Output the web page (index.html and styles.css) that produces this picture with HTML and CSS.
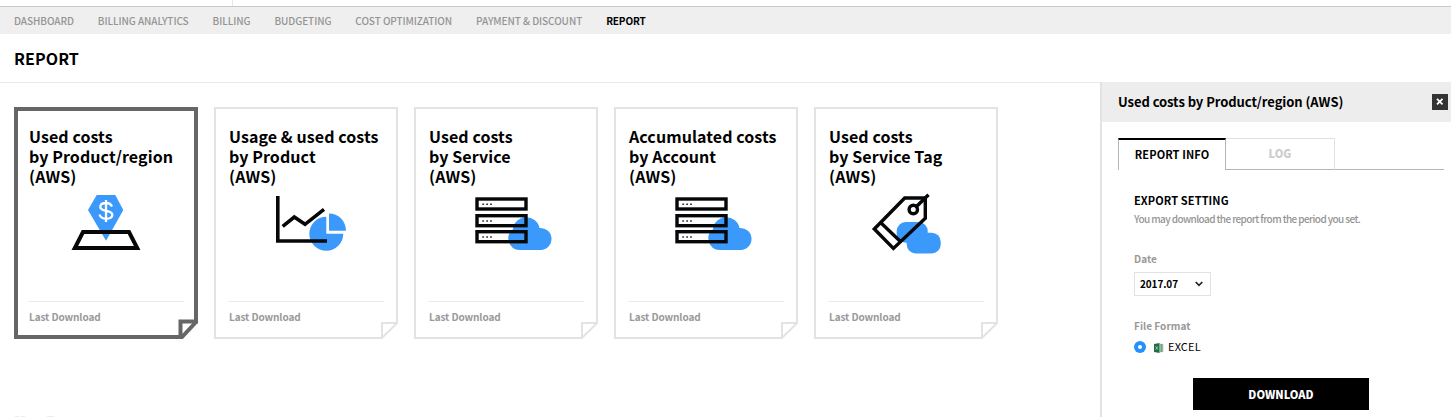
FILE: index.html
```
<!DOCTYPE html>
<html lang="en">
<head>
<meta charset="utf-8">
<title>Report</title>
<link rel="stylesheet" href="styles.css">
</head>
<body>
<svg class="defs" width="0" height="0" aria-hidden="true">
  <defs>
    <g id="frame"><path d="M1 1H183V216L168 231H1Z" fill="#fff"/><path d="M183 216H168V231" fill="none"/></g>
    <g id="servers">
      <path fill="#3c99fc" d="M63.500 58A11.500 11.500 0 0 1 57 37.300A13.400 13.400 0 0 1 83.500 36A11 11 0 0 1 85.500 58Z"/>
      <g fill="none" stroke="#050708" stroke-width="3.400"><rect x="21" y="7" width="49" height="10"/><rect x="21" y="23.700" width="49" height="10"/><rect x="21" y="39.700" width="49" height="10"/></g>
      <path fill="none" stroke="#333" stroke-width="1.600" stroke-dasharray="1.800 2.100" d="M26.300 12.300h10M26.300 29h10M26.300 45h10"/>
    </g>
  </defs>
</svg>
<header class="top"><div class="top-left"></div></header>
<nav class="nav">
  <a>DASHBOARD</a><a>BILLING ANALYTICS</a><a>BILLING</a><a>BUDGETING</a><a>COST OPTIMIZATION</a><a>PAYMENT &amp; DISCOUNT</a><a class="current">REPORT</a>
</nav>
<h1 class="page-title">REPORT</h1>
<div class="body">
  <main class="main">
    <div class="cards">
      <article class="card selected">
        <svg class="frame" viewBox="0 0 184 232"><path d="M2 2H182V215L168 230H2Z" fill="#fff"/><path d="M184 214.500H166.500V232" fill="none"/></svg>
        <h2>Used costs<br>by Product/region<br>(AWS)</h2>
        <svg class="icon" viewBox="0 0 100 64">
          <path fill="#3c99fc" d="M40.700 3H59.300L67.300 18L50 48.700L32 18Z"/>
          <path fill="none" stroke="#fff" stroke-width="2.300" d="M56 14.500C55 12 53 11 50 11C46.500 11 44.300 12.500 44.300 15C44.300 20.500 56.300 17 56.300 22.700C56.300 25.300 53.500 26.700 50 26.700C46.500 26.700 44.300 25.200 43.500 22.500M50 8V30"/>
          <path fill="none" stroke="#050708" stroke-width="4" d="M27 40H73L81.200 56H18.800Z"/>
        </svg>
        <p class="last">Last Download</p>
      </article>
      <article class="card">
        <svg class="frame" viewBox="0 0 184 232"><use href="#frame"/></svg>
        <h2>Usage &amp; used costs<br>by Product<br>(AWS)</h2>
        <svg class="icon" viewBox="0 0 100 64">
          <path fill="#3c99fc" d="M70.300 41.700V24.700A17 17 0 1 0 87.300 41.700ZM73 38.700V21.500A17 17 0 0 1 90 38.700Z"/>
          <path fill="none" stroke="#050708" stroke-width="3.600" d="M21.800 4V49H71M26.700 34.300L38.300 25L49 32.300L68 17.300"/>
        </svg>
        <p class="last">Last Download</p>
      </article>
      <article class="card">
        <svg class="frame" viewBox="0 0 184 232"><use href="#frame"/></svg>
        <h2>Used costs<br>by Service<br>(AWS)</h2>
        <svg class="icon" viewBox="0 0 100 64"><use href="#servers"/></svg>
        <p class="last">Last Download</p>
      </article>
      <article class="card">
        <svg class="frame" viewBox="0 0 184 232"><use href="#frame"/></svg>
        <h2>Accumulated costs<br>by Account<br>(AWS)</h2>
        <svg class="icon" viewBox="0 0 100 64"><use href="#servers"/></svg>
        <p class="last">Last Download</p>
      </article>
      <article class="card">
        <svg class="frame" viewBox="0 0 184 232"><use href="#frame"/></svg>
        <h2>Used costs<br>by Service Tag<br>(AWS)</h2>
        <svg class="icon" viewBox="0 0 100 64">
          <g fill="#3c99fc"><rect x="40.700" y="30" width="31" height="20.700" rx="9"/><rect x="50.700" y="40.700" width="34" height="20.700" rx="9"/></g>
          <g fill="none" stroke="#050708" stroke-width="3.400"><path d="M18.300 37L48.700 6H69.300V26.300L37.400 56.400ZM24.300 30.300L44.700 49.700"/><circle cx="57.300" cy="17.500" r="4.200"/><path d="M60.500 14.500L72.500 2.700"/></g>
        </svg>
        <p class="last">Last Download</p>
      </article>
    </div>
    <div class="next-row"><i></i><i></i><i></i></div>
  </main>
  <aside class="panel">
    <div class="panel-head">
      <h3>Used costs by Product/region (AWS)</h3>
      <svg class="close" width="16" height="16" viewBox="0 0 16 16"><rect width="16" height="16" fill="#333"/><path d="M5 4.800L10.500 10.300M10.500 4.800L5 10.300" stroke="#fff" stroke-width="1.800"/></svg>
    </div>
    <div class="tabs"><div class="tab active"><span>REPORT INFO</span></div><div class="tab"><span>LOG</span></div><div class="tab-rest"></div></div>
    <section class="form">
      <h4>EXPORT SETTING</h4>
      <p class="hint">You may download the report from the period you set.</p>
      <div class="label date">Date</div>
      <div class="select"><span>2017.07</span><svg width="8" height="6" viewBox="0 0 8 6"><path d="M.7 1L4 4.300L7.300 1" fill="none" stroke="#222" stroke-width="1.700"/></svg></div>
      <div class="label format">File Format</div>
      <div class="option">
        <svg width="12" height="12" viewBox="0 0 12 12"><circle cx="6" cy="6" r="6" fill="#2490ff"/><circle cx="6" cy="6" r="2" fill="#fff"/></svg>
        <svg class="excel" width="10" height="10" viewBox="0 0 10 10"><path fill="#1d7044" d="M0 1L5.500 0V10L0 9Z"/><path fill="#a9cbb6" stroke="#5b9672" stroke-width=".6" d="M5.800 1.300H8.800V8.700H5.800Z"/><path stroke="#5b9672" stroke-width=".8" d="M7.400 1.300V8.700"/><path d="M1.700 3.500L3.800 6.600M3.800 3.500L1.700 6.600" stroke="#b9d6c5" stroke-width=".8"/></svg>
        <span>EXCEL</span>
      </div>
    </section>
    <button class="download"><span>DOWNLOAD</span></button>
  </aside>
</div>
</body>
</html>
```
FILE: styles.css
```
* { box-sizing: border-box; margin: 0; padding: 0; }
html, body { height: 417px; overflow: hidden; background: #fff; }
body { font-family: "Noto Sans CJK KR", "Noto Sans", sans-serif; color: #000; display: flex; flex-direction: column; }
h1, h2, h3, h4, p, span, a { white-space: nowrap; }
.defs { position: absolute; }
.top { flex: none; height: 7px; border-bottom: 1px solid #c8cac8; }
.top-left { width: 233px; height: 6px; border-right: 1px solid #e8e8e8; }
.nav { flex: none; height: 27px; background: #efefef; display: flex; gap: 24px; padding: 0 0 0 14px; font-size: 10px; font-weight: 500; line-height: 28px; letter-spacing: -.07px; color: #949494; }
.nav .current { color: #000; font-weight: 700; letter-spacing: -.15px; }
.page-title { flex: none; height: 49px; border-bottom: 1px solid #ebebeb; padding-left: 14px; font-size: 16px; line-height: 48px; font-weight: 700; letter-spacing: .1px; }
.body { flex: 1; display: flex; min-height: 0; }
.main { flex: 1; padding: 24px 0 0 14px; display: flex; flex-direction: column; justify-content: space-between; }
.cards { display: flex; gap: 16px; }
.card { position: relative; width: 184px; height: 232px; display: flex; flex-direction: column; padding: 19px 14px 0; }
.frame { position: absolute; left: 0; top: 0; width: 184px; height: 232px; stroke: #e3e3e3; stroke-width: 2; }
.selected .frame { stroke: #666; stroke-width: 4; }
.card h2 { position: relative; height: 60px; padding-left: 1px; font-size: 16px; line-height: 20px; font-weight: 700; letter-spacing: .08px; }
.icon { position: relative; width: 100px; height: 64px; margin: 6px 0 0 28px; }
.last { position: relative; margin-top: 45px; border-top: 1px solid #ebebeb; padding-left: 1px; font-size: 10px; line-height: 29px; font-weight: 700; letter-spacing: -.1px; color: #999; }
.next-row { display: flex; height: 1px; }
.next-row i { height: 1px; width: 4px; margin: 0 1px; background: #eee; }
.next-row i:last-child { width: 7px; margin-left: 21px; }
.panel { width: 351px; margin-top: -1px; border-left: 2px solid #e2e2e2; background: #fff; }
.panel-head { height: 40px; background: #ededed; display: flex; align-items: center; justify-content: space-between; padding: 0 3px 0 16px; }
.panel-head h3 { font-size: 13px; font-weight: 700; line-height: 40px; letter-spacing: -.06px; }
.tabs { display: flex; height: 32px; margin: 16px 7px 0 16px; }
.tab { width: 109px; border: 1px solid #e2e2e2; border-left: 0; border-bottom-color: #b5b5b5; text-align: center; font-size: 11px; font-weight: 900; line-height: 29px; color: #ccc; }
.tab.active { width: 108px; border: 1px solid #b5b5b5; border-top: 2px solid #000; border-bottom: 0; font-weight: 700; letter-spacing: .1px; line-height: 28px; color: #000; }
.tab-rest { flex: 1; border-bottom: 1px solid #b5b5b5; }
.form { padding: 22px 0 0 32px; }
.form h4 { height: 16px; font-size: 11px; line-height: 16px; font-weight: 700; letter-spacing: .1px; }
.hint { height: 20px; font-size: 10px; line-height: 21px; color: #949494; font-weight: 500; letter-spacing: -.6px; }
.label { font-size: 10px; line-height: 17px; height: 16px; color: #999; font-weight: 700; letter-spacing: .05px; }
.date { margin-top: 22px; }
.select { display: flex; align-items: center; justify-content: space-between; width: 77px; height: 24px; border: 1px solid #e2e2e2; margin-top: 6px; padding: 0 7px 0 5px; font-size: 10px; line-height: 20px; font-weight: 700; letter-spacing: -.1px; }
.format { margin-top: 22px; line-height: 15px; }
.option { display: flex; align-items: center; height: 16px; margin-top: 5px; font-size: 11px; line-height: 14px; letter-spacing: .15px; }
.option span { margin-top: -2px; }
.excel { margin: 2px 4px 0 8px; }
.download { display: block; width: 176px; height: 32px; margin: 23px 0 0 91px; background: #000; border: 0; color: #fff; font: 900 11px/32px "Noto Sans CJK KR", sans-serif; }
```
